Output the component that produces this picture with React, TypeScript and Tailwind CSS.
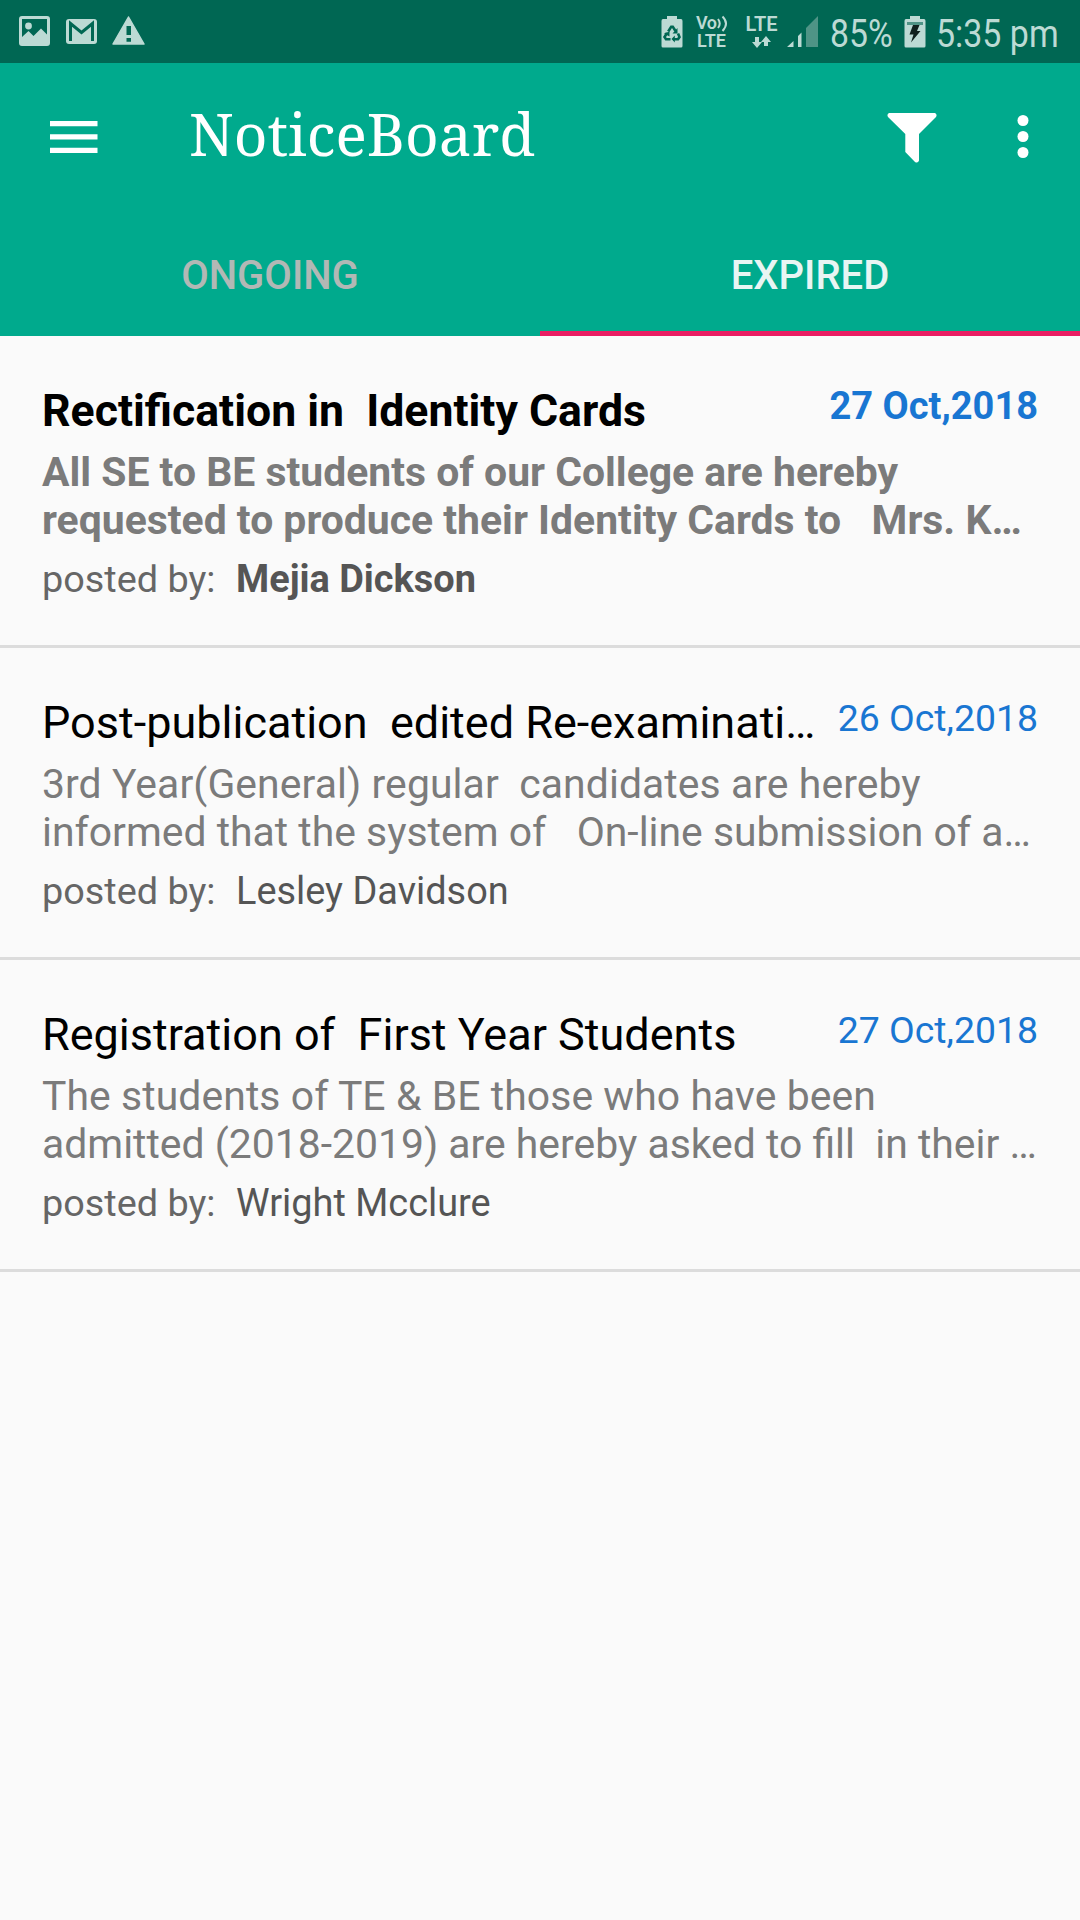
import React from "react";

type Notice = {
  title: string;
  date: string;
  lines: [string, string];
  author: string;
  unread?: boolean;
};

const notices: Notice[] = [
  {
    title: "Rectification in\u00a0 Identity Cards",
    date: "27 Oct,2018",
    lines: [
      "All SE to BE students of our College are hereby",
      "requested to produce their Identity Cards to \u00a0 Mrs. K…",
    ],
    author: "Mejia Dickson",
    unread: true,
  },
  {
    title: "Post-publication\u00a0 edited Re-examinati…",
    date: "26 Oct,2018",
    lines: [
      "3rd Year(General) regular\u00a0 candidates are hereby",
      "informed that the system of \u00a0 On-line submission of a…",
    ],
    author: "Lesley Davidson",
  },
  {
    title: "Registration of\u00a0 First Year Students",
    date: "27 Oct,2018",
    lines: [
      "The students of TE & BE those who have been",
      "admitted (2018-2019) are hereby asked to fill\u00a0 in their …",
    ],
    author: "Wright Mcclure",
  },
];

function StatusBar() {
  return (
    <div className="flex h-[63px] items-start bg-[#006753] text-[#bcdad4]">
      <svg className="ml-[19px] mt-4 h-[30px] w-[31px] shrink-0" viewBox="0 0 31 30">
        <path
          fill="currentColor"
          fillRule="evenodd"
          d="M3 0H28Q31 0 31 3V27Q31 30 28 30H3Q0 30 0 27V3Q0 0 3 0ZM3 3V21L9.500 15L14.500 20L22 12.500L28 18.500V3Z"
        />
        <circle cx="9.500" cy="10" r="3.400" fill="currentColor" />
      </svg>
      <svg className="ml-4 mt-[19px] h-[25px] w-[31px] shrink-0" viewBox="0 0 31 25">
        <rect width="31" height="25" rx="3" fill="currentColor" />
        <path d="M4.500 22V4.500L15.500 13.500L26.500 4.500V22" fill="none" stroke="#006753" strokeWidth="3" />
      </svg>
      <svg className="ml-[15px] mt-4 h-[29px] w-[33px] shrink-0" viewBox="0 0 33 29">
        <path d="M16.500 1L32 28H1Z" fill="currentColor" stroke="currentColor" strokeWidth="1.500" strokeLinejoin="round" />
        <path d="M14.500 10h4.500v9h-4.500zM14.500 22h4.500v3.800h-4.500z" fill="#006753" />
      </svg>
      <div className="grow" />
      <svg className="mr-[13px] mt-4 h-8 w-[22px] shrink-0" viewBox="0 0 22 32">
        <path d="M6 0H16V3H20Q21.500 3 21.500 5V30Q21.500 31.500 20 31.500H2Q0.500 31.500 0.500 30V5Q0.500 3 2 3H6Z" fill="currentColor" />
        <g fill="none" stroke="#006753" strokeWidth="2.600">
          <path d="M7.200 15.500L10.200 10.800H11.800L14.500 15" />
          <path d="M17 17.500L18.500 21L17 23.200H12" />
          <path d="M9.500 23.200H5L3.500 21L6 17" />
        </g>
        <path d="M16.500 12V17.500H11.500ZM13.800 19.500V26.500L10.500 23ZM3 17.500L8.500 15.500L8.500 20.500Z" fill="#006753" />
      </svg>
      <div className="mr-[15px] mt-[14px] flex h-9 w-[33px] shrink-0 flex-col font-[Roboto] text-[18px] font-semibold leading-[18px]">
        <span className="flex items-center">
          <span className="w-[21px] shrink-0 tracking-[-0.5px]">Vo</span>
          <svg className="h-[17px] w-[12px] shrink-0" viewBox="0 0 12 17" fill="none" stroke="currentColor" strokeWidth="2">
            <path d="M1 4Q4.500 8.500 1 13M5.500 1.500Q12.500 8.500 5.500 16" />
          </svg>
        </span>
        <span className="pl-px">LTE</span>
      </div>
      <div className="mr-2 mt-[14px] flex h-9 w-[35px] shrink-0 flex-col items-center font-[Roboto] text-[20px] font-semibold leading-[21px]">
        <span>LTE</span>
        <svg className="mt-px h-3 w-[19px]" viewBox="0 0 19 12" fill="currentColor">
          <path d="M3 1h4v5h3l-5 6l-5-6h3zM12 10h4V6h3l-5-6l-5 6h3z" />
        </svg>
      </div>
      <svg className="mr-[11px] mt-4 h-8 w-[32px] shrink-0" viewBox="0 0 32 32" fill="currentColor">
        <path d="M0 31L6.500 25V31ZM11 20L14.500 16.500V31H11Z" />
        <path d="M19 12L31 0V31H19Z" fill="#4f9486" />
      </svg>
      <span className="mt-[12.5px] w-[62px] shrink-0 origin-left scale-x-[.865] whitespace-nowrap font-[Roboto] text-[39px] leading-[42px]">
        85%
      </span>
      <svg className="ml-3 mt-4 h-8 w-[22px] shrink-0" viewBox="0 0 22 32">
        <path d="M6 0H16V3H20Q21.500 3 21.500 5V30Q21.500 31.500 20 31.500H2Q0.500 31.500 0.500 30V5Q0.500 3 2 3H6Z" fill="currentColor" />
        <path d="M3 6H19V9H3Z" fill="#4f9486" />
        <path d="M9 9H15.500L13 15H16.500L7 26.500L9.500 18.500H5.500Z" fill="#10211e" />
      </svg>
      <span className="ml-[10px] mt-[12.5px] w-[144px] shrink-0 origin-left scale-x-[.87] whitespace-nowrap font-[Roboto] text-[39px] leading-[42px]">
        5:35 pm
      </span>
    </div>
  );
}

function Toolbar() {
  return (
    <div className="flex h-[147px] items-center text-white">
      <svg className="ml-[50px] h-8 w-12 shrink-0" viewBox="0 0 48 32" fill="currentColor">
        <path d="M0 0h47.500v5.300h-47.500zM0 13.300h47.500v5.300h-47.500zM0 26.700h47.500v5.300h-47.500z" />
      </svg>
      <h1 className="ml-[91px] mt-[-7px] w-[600px] whitespace-nowrap font-['Noto_Serif','DejaVu_Serif',serif] text-[58.5px] leading-[80px]">
        NoticeBoard
      </h1>
      <svg className="ml-[98px] mt-[3px] h-[50px] w-[50px] shrink-0" viewBox="0 0 50 50" fill="currentColor">
        <path d="M2 0H48Q50.500 1.500 49 4L32 21V47.500Q31 50.500 28 49L18.300 39V21L1 4Q-.500 1.500 2 0Z" />
      </svg>
      <svg className="ml-[79.5px] h-[43px] w-3 shrink-0" viewBox="0 0 12 43" fill="currentColor">
        <circle cx="6" cy="5.500" r="5.500" />
        <circle cx="6" cy="21.500" r="5.500" />
        <circle cx="6" cy="37.500" r="5.500" />
      </svg>
    </div>
  );
}

function Tabs() {
  return (
    <div className="grid h-[126px] grid-cols-2 text-center font-[Roboto] text-[40px] font-medium leading-[132px]">
      <div className="text-[#b2b8b5]">ONGOING</div>
      <div className="h-[126px] border-b-[5px] border-[#e91e63] text-[#e8f5f3]">EXPIRED</div>
    </div>
  );
}

function NoticeRow({ notice }: { notice: Notice }) {
  const weight = notice.unread ? "font-bold" : "font-normal";
  const titleSize = notice.unread ? "text-[44.6px]" : "text-[45px]";
  const dateSize = notice.unread ? "text-[38px]" : "text-[37.4px]";
  const leadTracking = notice.unread ? "" : "tracking-[0.08px]";
  return (
    <article className="h-[312px] border-b-[3px] border-[#dcdcdc] px-[42px] pt-12">
      <div className="flex justify-between whitespace-pre">
        <h2 className={`${titleSize} leading-[54px] text-black ${weight}`}>{notice.title}</h2>
        <span className={`${dateSize} leading-[44px] text-[#1976d2] ${weight}`}>{notice.date}</span>
      </div>
      <div className={`mt-[10px] whitespace-pre text-[40.9px] leading-[48px] text-[#7b7b7b] ${weight}`}>
        <p className={leadTracking}>{notice.lines[0]}</p>
        <p>{notice.lines[1]}</p>
      </div>
      <div className="mt-[13px] flex text-[37.9px] leading-[44px]">
        <span className="w-[194px] text-[37.8px] text-[#666]">posted by:</span>
        <span className={`text-[#555] ${weight}`}>{notice.author}</span>
      </div>
    </article>
  );
}

export default function App() {
  return (
    <div className="h-[1920px] w-[1080px] overflow-hidden bg-[#fafafa] font-[Roboto]">
      <StatusBar />
      <header className="bg-[#00aa8d]">
        <Toolbar />
        <Tabs />
      </header>
      <main>
        {notices.map((n) => (
          <NoticeRow key={n.title} notice={n} />
        ))}
      </main>
    </div>
  );
}
